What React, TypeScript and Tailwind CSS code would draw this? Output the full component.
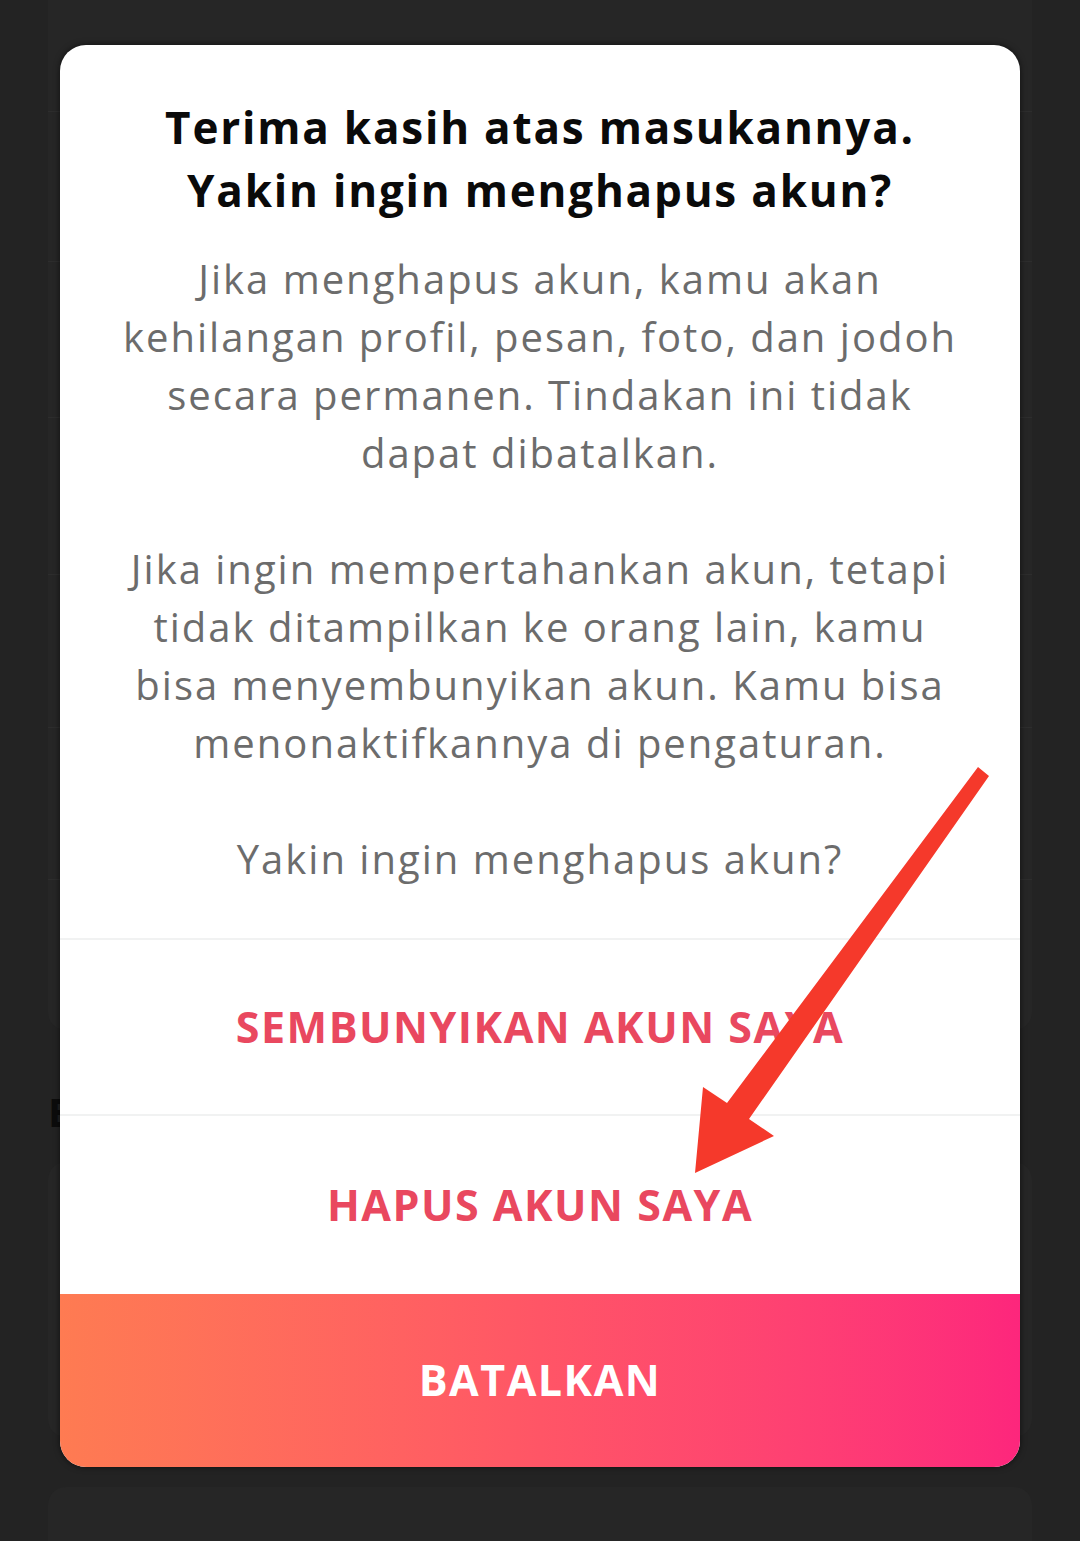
import React from 'react';

const font = { fontFamily: '"Open Sans", Lato, Arial, sans-serif' };

function BackgroundPage() {
  const rows = [112, 150, 156, 157, 153, 152, 150];
  return (
    <div className="flex flex-col px-12">
      <div className="-mt-[40px] flex flex-col rounded-b-[18px] bg-[#262626]">
        {rows.map((h, i) => (
          <div
            key={i}
            className={i === rows.length - 1 ? '' : 'border-b border-[#2d2d2d]'}
            style={{ height: i === 0 ? h + 40 : h }}
          />
        ))}
      </div>
      <div className="pt-[62px] pb-[30px] text-[40px] font-bold leading-[40px] text-[#0c0c0c]">E</div>
      <div className="h-[275px] rounded-[18px] bg-[#262626]" />
      <div className="mt-[50px] h-[120px] rounded-t-[18px] bg-[#262626]" />
    </div>
  );
}

function ArrowMark() {
  return (
    <svg className="pointer-events-none absolute left-0 top-0" width="1080" height="1541" viewBox="0 0 1080 1541">
      <polygon
        points="978,767 989,776 749,1119 774,1136 695,1173 703,1087 727,1103"
        fill="#f5392b"
      />
    </svg>
  );
}

export default function App() {
  return (
    <div className="relative h-[1541px] w-full overflow-hidden bg-[#232323]" style={font}>
      <BackgroundPage />

      <div className="absolute left-[60px] top-[45px] w-[960px] overflow-hidden rounded-[26px] bg-white shadow-[0_0_6px_rgba(0,0,0,0.6)]">
        <div className="flex flex-col items-center px-2 pb-[50px] pt-[51px] text-center">
          <h2 className="whitespace-nowrap text-[44px] font-bold leading-[63px] tracking-[1.8px] text-[#0a0a0a]">
            Terima kasih atas masukannya.
            <br />
            Yakin ingin menghapus akun?
          </h2>
          <p className="mt-[28px] whitespace-nowrap text-[40px] leading-[58px] tracking-[2px] text-[#6c6c6c]">
            Jika menghapus akun, kamu akan
            <br />
            kehilangan profil, pesan, foto, dan jodoh
            <br />
            secara permanen. Tindakan ini tidak
            <br />
            dapat dibatalkan.
            <br />
            <br />
            Jika ingin mempertahankan akun, tetapi
            <br />
            tidak ditampilkan ke orang lain, kamu
            <br />
            bisa menyembunyikan akun. Kamu bisa
            <br />
            menonaktifkannya di pengaturan.
            <br />
            <br />
            Yakin ingin menghapus akun?
          </p>
        </div>

        <button className="flex h-[176px] w-full items-center justify-center border-t-2 border-[#f1f2f2] text-[43px] font-bold tracking-[1.5px] text-[#e9485f]">
          SEMBUNYIKAN AKUN SAYA
        </button>
        <button className="flex h-[180px] w-full items-center justify-center border-t-2 border-[#f1f2f2] text-[43px] font-bold tracking-[1.5px] text-[#e9485f]">
          HAPUS AKUN SAYA
        </button>
        <button className="flex h-[173px] w-full items-center justify-center bg-gradient-to-r from-[#fe7b52] via-[#ff5566] to-[#fd267c] text-[43px] font-bold tracking-[1.5px] text-white">
          BATALKAN
        </button>
      </div>

      <ArrowMark />
    </div>
  );
}
